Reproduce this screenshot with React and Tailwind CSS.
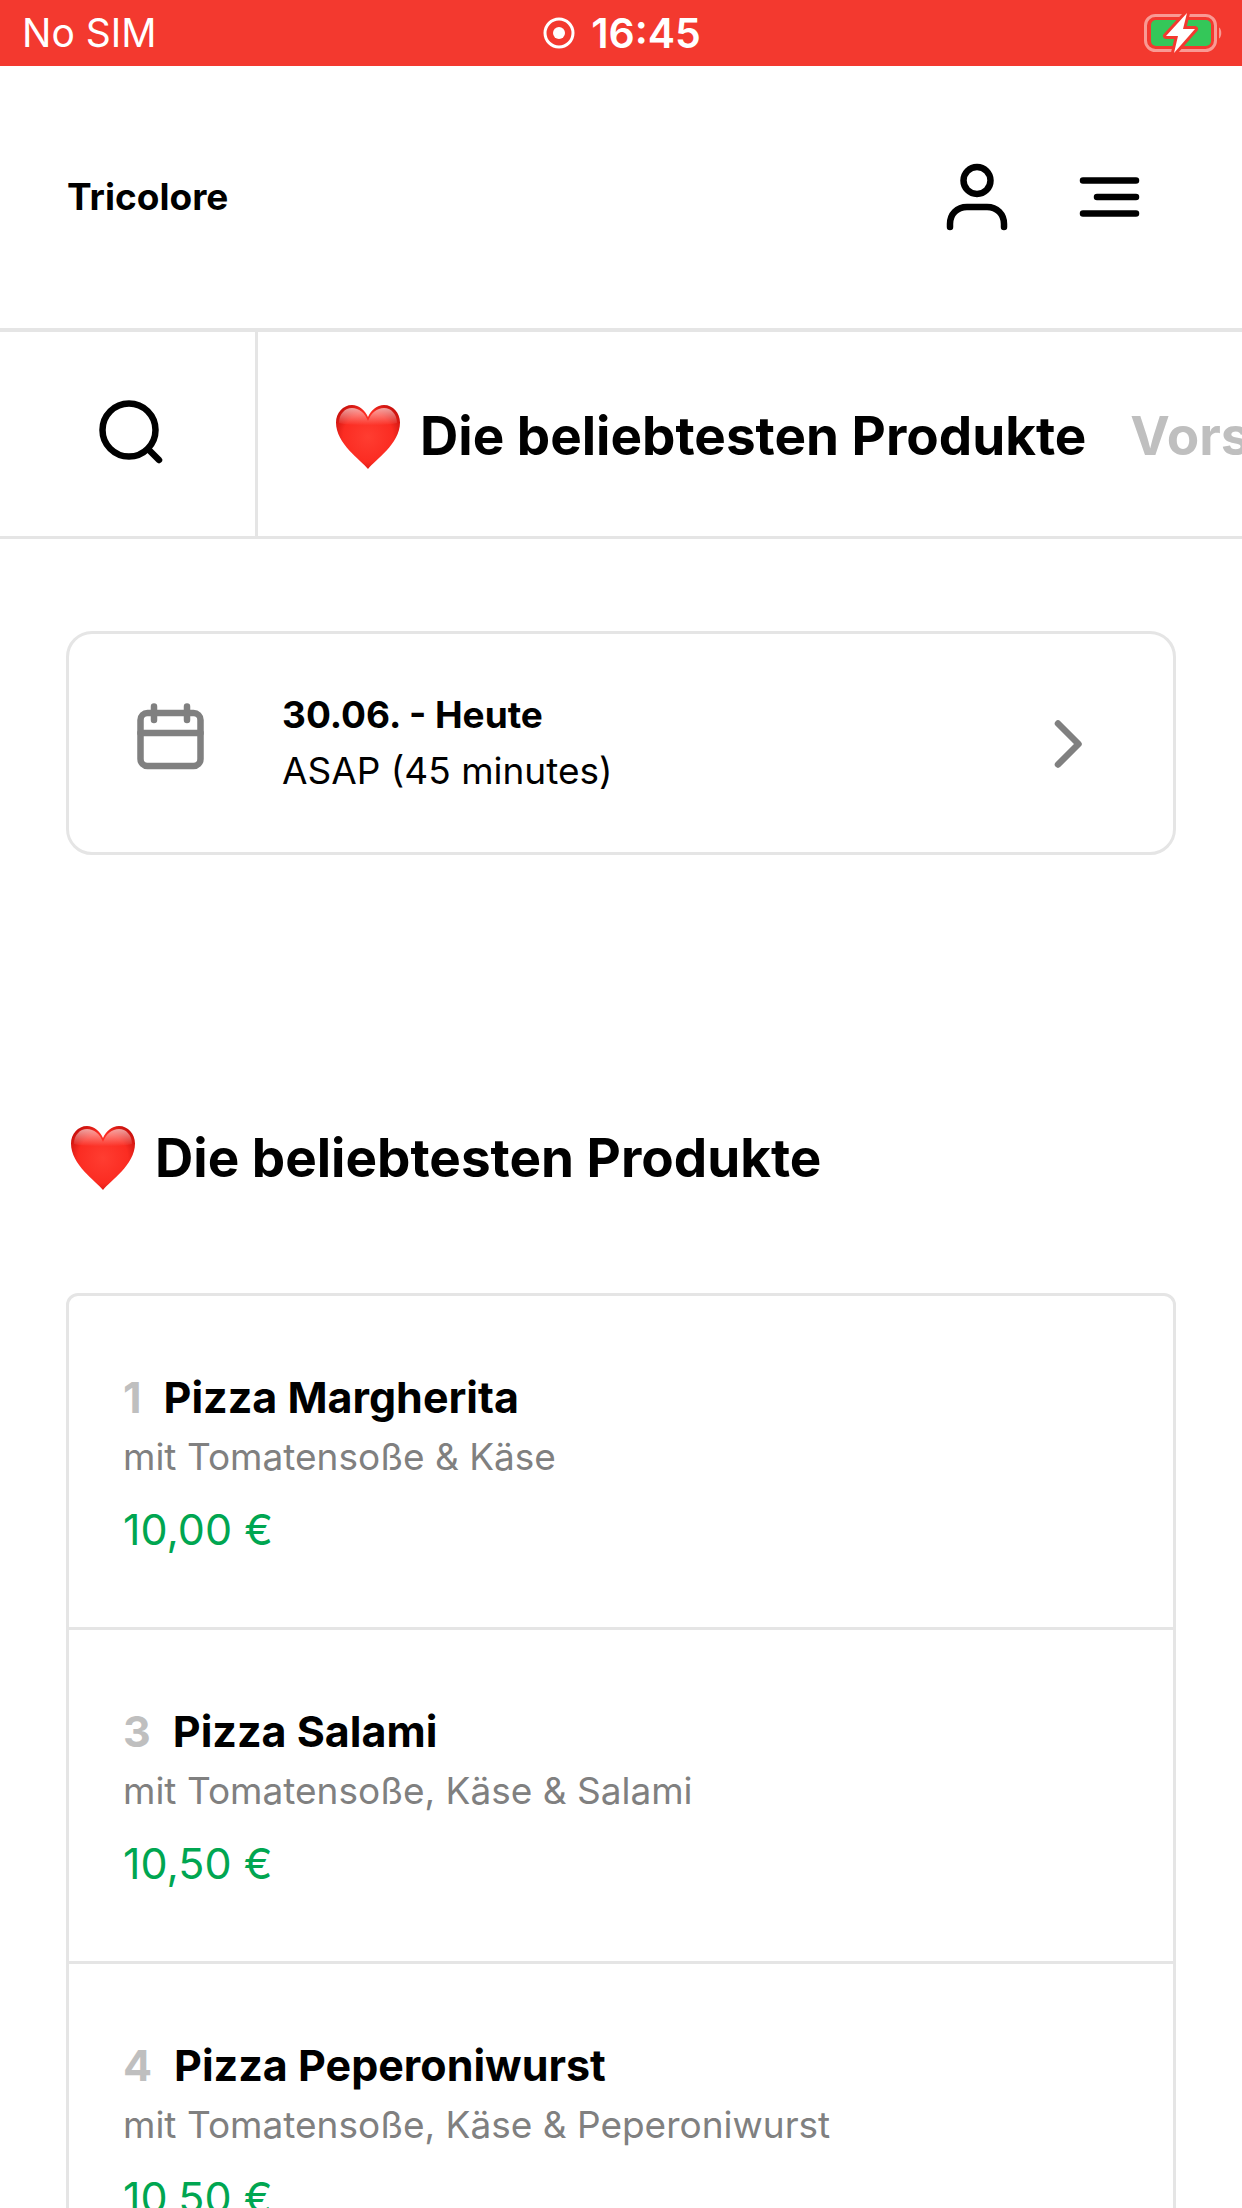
import { useState } from "react";

const categories = [
  { id: "popular", name: "Die beliebtesten Produkte", heart: true },
  { id: "starters", name: "Vorspeisen" },
];

const products = [
  {
    number: "1",
    name: "Pizza Margherita",
    description: "mit Tomatensoße & Käse",
    price: "10,00 €",
  },
  {
    number: "3",
    name: "Pizza Salami",
    description: "mit Tomatensoße, Käse & Salami",
    price: "10,50 €",
  },
  {
    number: "4",
    name: "Pizza Peperoniwurst",
    description: "mit Tomatensoße, Käse & Peperoniwurst",
    price: "10,50 €",
  },
];

function Heart({ id }) {
  return (
    <svg viewBox="0 0 64 64" className="size-16 shrink-0" aria-hidden="true">
      <defs>
        <radialGradient id={`${id}-fill`} cx="0.5" cy="0.5" r="0.6">
          <stop offset="0" stopColor="#ff3d31" />
          <stop offset="0.65" stopColor="#fb2c22" />
          <stop offset="1" stopColor="#c8100c" />
        </radialGradient>
        <linearGradient id={`${id}-shine`} x1="0" y1="0" x2="0" y2="1">
          <stop offset="0" stopColor="#fff" stopOpacity="0.6" />
          <stop offset="1" stopColor="#fff" stopOpacity="0" />
        </linearGradient>
      </defs>
      <path
        d="M32 64C25 55 0 39 0 17.5C0 8 7 0 16 0C23 0 29 5 32 12C35 5 41 0 48 0C57 0 64 8 64 17.5C64 39 39 55 32 64Z"
        fill={`url(#${id}-fill)`}
      />
      <path
        d="M3 18C3 9 9 3 16 3C23 3 29 8 32 16C35 8 41 3 48 3C55 3 61 9 61 18C52 21 12 21 3 18Z"
        fill={`url(#${id}-shine)`}
      />
    </svg>
  );
}

function StatusBar() {
  return (
    <div className="grid h-[66px] grid-cols-3 items-center bg-[#f3392f] pr-5 pl-[22px] leading-[48px] text-white">
      <span className="text-[39px]">No SIM</span>
      <div className="flex items-center justify-center gap-4">
        <svg viewBox="0 0 32 32" className="size-8" aria-hidden="true">
          <circle cx="16" cy="16" r="14" fill="none" stroke="#fff" strokeWidth="3" />
          <circle cx="16" cy="16" r="6" fill="#fff" />
        </svg>
        <span className="text-[41px] font-semibold">16:45</span>
      </div>
      <svg
        viewBox="0 0 80 40"
        className="h-10 w-20 justify-self-end"
        aria-hidden="true"
      >
        <rect
          x="3.5"
          y="2.5"
          width="70"
          height="35"
          rx="10"
          fill="none"
          stroke="#f99a94"
          strokeWidth="3"
        />
        <path d="M77 14.5C80 16 80 24 77 25.5Z" fill="#f99a94" />
        <rect x="9" y="7" width="60" height="26" rx="5" fill="#34c759" />
        <path
          d="M45 0L24 23H36L32 40L53 16H41Z"
          fill="#fff"
          stroke="#f3392f"
          strokeWidth="6"
          strokeLinejoin="round"
          paintOrder="stroke"
        />
      </svg>
    </div>
  );
}

function Header() {
  return (
    <header className="flex h-[266px] items-center justify-between border-b-4 border-[#e5e5e5] px-[67px]">
      <a href="#home" className="text-[37px] font-bold">
        Tricolore
      </a>
      <div className="flex items-center gap-15 pr-8">
        <button type="button" aria-label="Konto">
          <svg
            viewBox="0 0 72 72"
            className="size-18"
            fill="none"
            stroke="#000"
            strokeWidth="6.5"
            strokeLinecap="round"
            aria-hidden="true"
          >
            <circle cx="38" cy="19.5" r="13.5" />
            <path d="M11 66V63C11 53 18 46 28 46H48C58 46 65 53 65 63V66" />
          </svg>
        </button>
        <button type="button" aria-label="Menü">
          <svg
            viewBox="0 0 72 72"
            className="size-18"
            fill="none"
            stroke="#000"
            strokeWidth="6.5"
            strokeLinecap="round"
            aria-hidden="true"
          >
            <path d="M12 19.5H65M26 36H65M12 52.5H65" />
          </svg>
        </button>
      </div>
    </header>
  );
}

function CategoryNav({ active, onSelect }) {
  return (
    <nav className="flex h-[207px] border-b-3 border-[#e5e5e5]">
      <button
        type="button"
        aria-label="Suche"
        className="flex w-[258px] shrink-0 items-center justify-center border-r-3 border-[#e5e5e5]"
      >
        <svg
          viewBox="0 0 72 72"
          className="size-18"
          fill="none"
          stroke="#000"
          strokeWidth="6.5"
          strokeLinecap="round"
          aria-hidden="true"
        >
          <circle cx="37" cy="32" r="26.5" />
          <path d="M56 51L67 62" />
        </svg>
      </button>
      <div className="flex min-w-0 flex-1 gap-11 overflow-x-auto pt-[5px] pl-[78px] [scrollbar-width:none]">
        {categories.map((category) => (
          <button
            key={category.id}
            type="button"
            onClick={() => onSelect(category.id)}
            className={`flex shrink-0 items-center gap-5 text-[53px] font-bold whitespace-nowrap ${
              active === category.id ? "text-black" : "text-[#bfbfbf]"
            }`}
          >
            {category.heart && <Heart id="nav-heart" />}
            {category.name}
          </button>
        ))}
      </div>
    </nav>
  );
}

function DeliveryTime() {
  return (
    <button
      type="button"
      className="flex w-full items-center rounded-[26px] border-3 border-[#e5e5e5] px-[66px] py-[53px] text-left text-[37px]"
    >
      <svg
        viewBox="0 0 72 72"
        className="mb-2 size-18 shrink-0"
        fill="none"
        stroke="#808080"
        strokeWidth="6.5"
        strokeLinecap="round"
        aria-hidden="true"
      >
        <rect x="5.5" y="10" width="60" height="53" rx="7" />
        <path d="M5.5 30H65.5M19 3.5V17M52 3.5V17" />
      </svg>
      <span className="ml-[75px] flex flex-1 flex-col">
        <span className="leading-14 font-bold">30.06. - Heute</span>
        <span className="leading-14">ASAP (45 minutes)</span>
      </span>
      <svg
        viewBox="0 0 72 72"
        className="size-18 shrink-0"
        fill="none"
        stroke="#808080"
        strokeWidth="6.5"
        strokeLinecap="round"
        strokeLinejoin="round"
        aria-hidden="true"
      >
        <path d="M23 16.5L43.5 37L23 57.5" />
      </svg>
    </button>
  );
}

function ProductRow({ product }) {
  return (
    <li className="border-b-3 border-[#e5e5e5] px-[54px] pt-[71px] pb-[68px]">
      <h3 className="flex gap-[22px] text-[43px] leading-15 font-bold">
        <span className="text-[#bfbfbf]">{product.number}</span>
        {product.name}
      </h3>
      <p className="text-[37px] leading-15 text-[#808080]">{product.description}</p>
      <p className="mt-3 text-[43px] leading-15 text-[#00a651]">{product.price}</p>
    </li>
  );
}

export default function App() {
  const [active, setActive] = useState("popular");

  return (
    <div className="min-h-screen bg-white font-['Inter',sans-serif] text-black">
      <StatusBar />
      <Header />
      <CategoryNav active={active} onSelect={setActive} />

      <main className="px-[66px] pt-[92px]">
        <DeliveryTime />

        <section className="mt-[263px]">
          <h2 className="flex items-center gap-5 pl-[5px] text-[53px] leading-20 font-bold">
            <Heart id="title-heart" />
            Die beliebtesten Produkte
          </h2>
          <ul className="mt-[95px] rounded-xl border-3 border-[#e5e5e5]">
            {products.map((product) => (
              <ProductRow key={product.number} product={product} />
            ))}
          </ul>
        </section>
      </main>
    </div>
  );
}
